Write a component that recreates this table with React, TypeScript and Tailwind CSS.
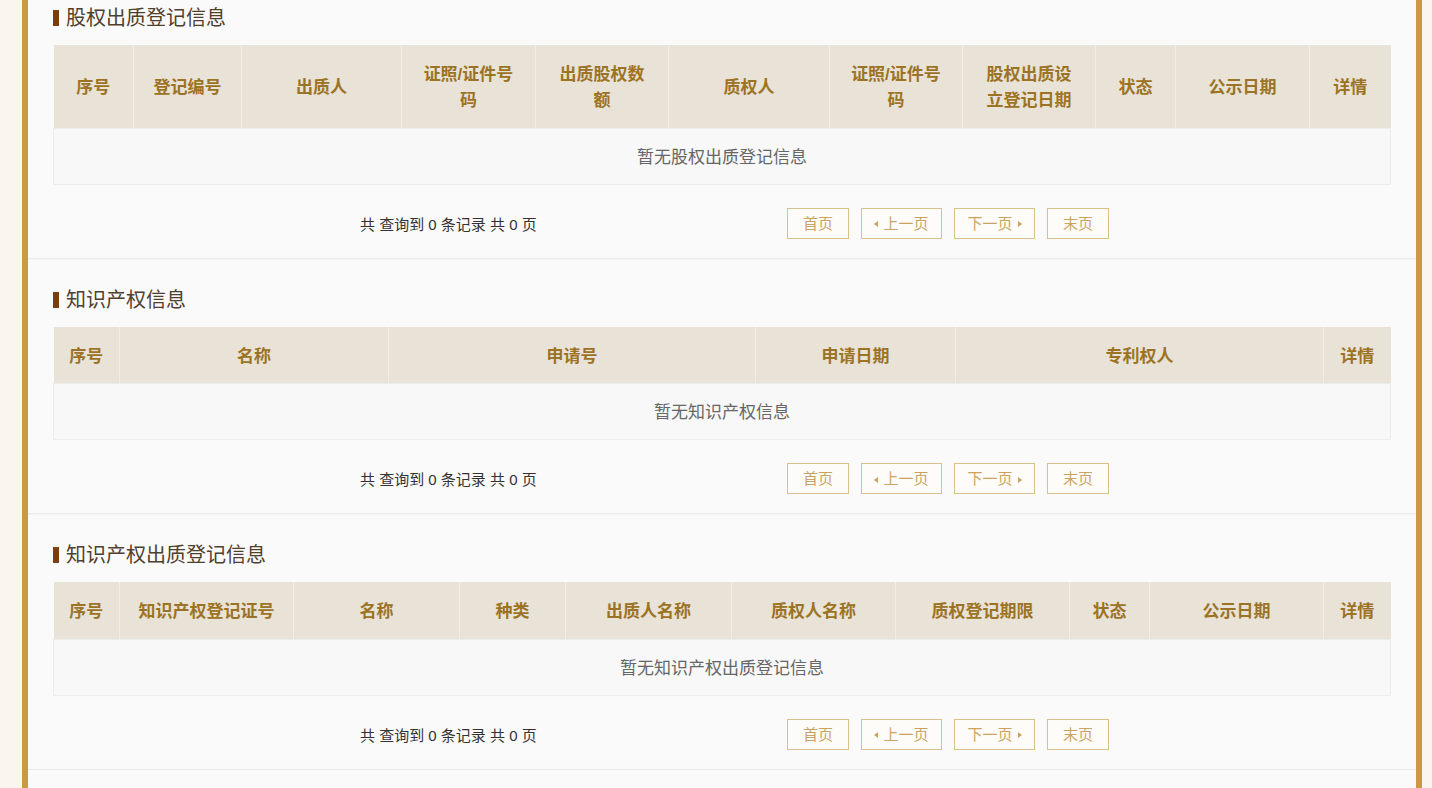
import React from 'react';

type Section = {
  title: string;
  cols: { label: string; w: number }[];
  empty: string;
  headH: string;
  pad: string;
  first?: boolean;
};

const sections: Section[] = [
  {
    title: '股权出质登记信息',
    headH: 'h-[83px]',
    pad: 'px-[16px]',
    first: true,
    empty: '暂无股权出质登记信息',
    cols: [
      { label: '序号', w: 80 },
      { label: '登记编号', w: 108 },
      { label: '出质人', w: 160 },
      { label: '证照/证件号码', w: 134 },
      { label: '出质股权数额', w: 133 },
      { label: '质权人', w: 161 },
      { label: '证照/证件号码', w: 133 },
      { label: '股权出质设立登记日期', w: 133 },
      { label: '状态', w: 80 },
      { label: '公示日期', w: 134 },
      { label: '详情', w: 81 },
    ],
  },
  {
    title: '知识产权信息',
    headH: 'h-[57px]',
    pad: 'px-[4px]',
    empty: '暂无知识产权信息',
    cols: [
      { label: '序号', w: 66 },
      { label: '名称', w: 269 },
      { label: '申请号', w: 367 },
      { label: '申请日期', w: 200 },
      { label: '专利权人', w: 368 },
      { label: '详情', w: 67 },
    ],
  },
  {
    title: '知识产权出质登记信息',
    headH: 'h-[57px]',
    pad: 'px-[4px]',
    empty: '暂无知识产权出质登记信息',
    cols: [
      { label: '序号', w: 66 },
      { label: '知识产权登记证号', w: 174 },
      { label: '名称', w: 166 },
      { label: '种类', w: 106 },
      { label: '出质人名称', w: 166 },
      { label: '质权人名称', w: 164 },
      { label: '质权登记期限', w: 174 },
      { label: '状态', w: 80 },
      { label: '公示日期', w: 174 },
      { label: '详情', w: 67 },
    ],
  },
];

function Pager() {
  const btn =
    'h-[31px] flex items-center justify-center border border-[#d9bf8a] bg-[#fdfcf9] pt-[2px] text-[15px] text-[#c9a461]';
  return (
    <div className="mt-[23px] flex h-[31px] items-center">
      <div className="w-[734px] pt-[4px] pl-[307px] text-[15px] text-[#333]">共 查询到 0 条记录 共 0 页</div>
      <div className="flex gap-[12px]">
        <div className={`${btn} w-[62px]`}>首页</div>
        <div className={`${btn} w-[81px] gap-[5px]`}>
          <span className="inline-block h-0 w-0 border-y-[3px] border-r-[4px] border-y-transparent border-r-[#c9a461]" />
          上一页
        </div>
        <div className={`${btn} w-[81px] gap-[5px]`}>
          下一页
          <span className="inline-block h-0 w-0 border-y-[3px] border-l-[4px] border-y-transparent border-l-[#c9a461]" />
        </div>
        <div className={`${btn} w-[62px]`}>末页</div>
      </div>
    </div>
  );
}

function Block({ s }: { s: Section }) {
  return (
    <section
      className={`border-b border-[#ebebeb] px-[25px] pb-[19px] ${s.first ? 'pt-[3px]' : 'border-t border-t-[#f4f4f4] pt-[25px]'}`}
    >
      <div className="flex h-[30px] items-center">
        <span className="mr-[7px] h-[16px] w-[6px] bg-[#7a3d0c]" />
        <span className="text-[20px] text-[#4f3f2e]">{s.title}</span>
      </div>
      <table className="mt-[12px] w-[1337px] table-fixed border-collapse">
        <colgroup>
          {s.cols.map((c, i) => (
            <col key={i} style={{ width: c.w }} />
          ))}
        </colgroup>
        <thead>
          <tr className={`${s.headH} bg-[#e8e2d7]`}>
            {s.cols.map((c, i) => (
              <th
                key={i}
                className={`border-l border-[#f2eee7] ${s.pad} pt-[4px] text-center align-middle text-[17px] leading-[26px] font-bold text-[#9c7324] first:border-l-0`}
              >
                {c.label}
              </th>
            ))}
          </tr>
        </thead>
        <tbody>
          <tr className="h-[56px] bg-[#f8f8f8]">
            <td
              colSpan={s.cols.length}
              className="border border-[#ececec] pt-[3px] text-center text-[17px] text-[#666]"
            >
              {s.empty}
            </td>
          </tr>
        </tbody>
      </table>
      <Pager />
    </section>
  );
}

export default function App() {
  return (
    <div
      className="min-h-screen w-[1432px] bg-[#faf6ef]"
      style={{ fontFamily: '"Liberation Sans", "Noto Sans CJK SC", sans-serif' }}
    >
      <div className="ml-[22px] min-h-screen w-[1400px] border-x-[6px] border-x-[#c99a3f] bg-[#fafafa]">
        {sections.map((s, i) => (
          <Block key={i} s={s} />
        ))}
      </div>
    </div>
  );
}
